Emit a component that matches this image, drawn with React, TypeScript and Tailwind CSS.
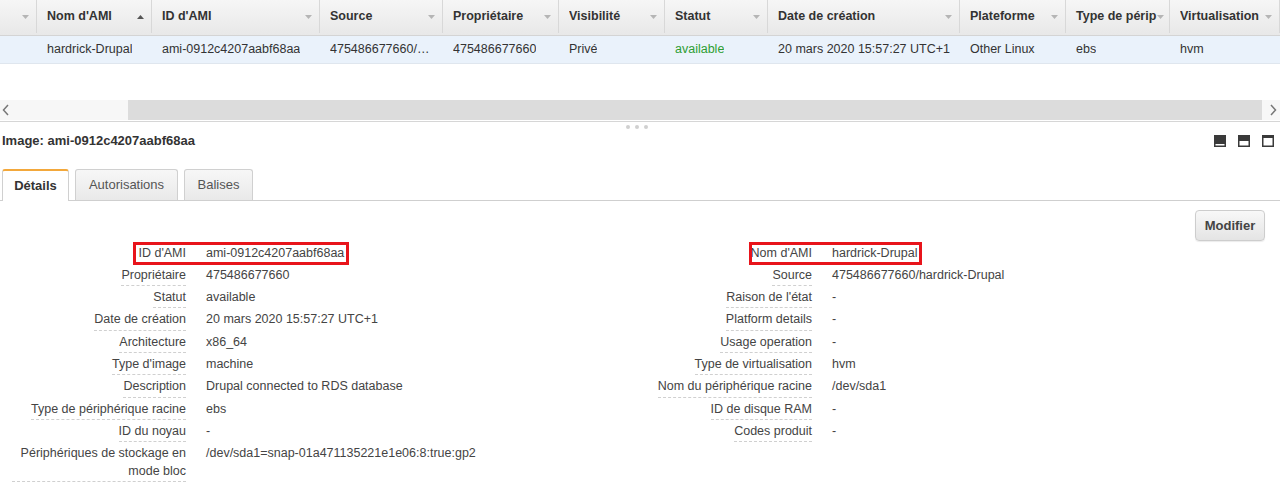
import type { ReactNode } from "react";

const columns = [
  { label: "", width: 37, value: "" },
  { label: "Nom d'AMI", width: 115, value: "hardrick-Drupal", sorted: true },
  { label: "ID d'AMI", width: 168, value: "ami-0912c4207aabf68aa" },
  { label: "Source", width: 123, value: "475486677660/hardrick-Drupal" },
  { label: "Propriétaire", width: 116, value: "475486677660" },
  { label: "Visibilité", width: 106, value: "Privé" },
  { label: "Statut", width: 103, value: "available", green: true },
  { label: "Date de création", width: 192, value: "20 mars 2020 15:57:27 UTC+1" },
  { label: "Plateforme", width: 106, value: "Other Linux" },
  { label: "Type de périp", width: 104, value: "ebs", tight: true },
  { label: "Virtualisation", width: 110, value: "hvm" },
];

const leftRows: Array<[string, string]> = [
  ["ID d'AMI", "ami-0912c4207aabf68aa"],
  ["Propriétaire", "475486677660"],
  ["Statut", "available"],
  ["Date de création", "20 mars 2020 15:57:27 UTC+1"],
  ["Architecture", "x86_64"],
  ["Type d'image", "machine"],
  ["Description", "Drupal connected to RDS database"],
  ["Type de périphérique racine", "ebs"],
  ["ID du noyau", "-"],
  ["Périphériques de stockage en mode bloc", "/dev/sda1=snap-01a471135221e1e06:8:true:gp2"],
];

const rightRows: Array<[string, string]> = [
  ["Nom d'AMI", "hardrick-Drupal"],
  ["Source", "475486677660/hardrick-Drupal"],
  ["Raison de l'état", "-"],
  ["Platform details", "-"],
  ["Usage operation", "-"],
  ["Type de virtualisation", "hvm"],
  ["Nom du périphérique racine", "/dev/sda1"],
  ["ID de disque RAM", "-"],
  ["Codes produit", "-"],
];

function Caret({ up }: { up?: boolean }) {
  return (
    <svg width="7" height="4" viewBox="0 0 7 4" className="shrink-0">
      {up ? (
        <path d="M0 4 L3.5 0 L7 4 Z" fill="#555" />
      ) : (
        <path d="M0 0 L7 0 L3.5 4 Z" fill="#b5b5b5" />
      )}
    </svg>
  );
}

function Chevron({ right }: { right?: boolean }) {
  return (
    <svg width="8" height="12" viewBox="0 0 8 12">
      <path
        d={right ? "M2 1 L6.5 6 L2 11" : "M6 1 L1.5 6 L6 11"}
        fill="none"
        stroke="#777"
        strokeWidth="1.5"
      />
    </svg>
  );
}

function PanelIcon({ fill }: { fill: number }) {
  // fill = height of the dark top part, out of 12
  return (
    <svg width="12" height="12" viewBox="0 0 12 12">
      <rect x="0" y="0" width="12" height="12" fill="#3a3a3a" />
      <rect x="1.5" y={fill} width="9" height={10.5 - fill} fill="#fff" />
    </svg>
  );
}

function DetailRow({
  label,
  value,
  labelWidth,
  boxed,
  boxLeft,
  boxWidth,
}: {
  label: string;
  value: ReactNode;
  labelWidth: number;
  boxed?: boolean;
  boxLeft?: number;
  boxWidth?: number;
}) {
  return (
    <div className="relative flex items-start text-[12.5px] leading-[18px] text-[#444]">
      <div className="shrink-0 text-right" style={{ width: labelWidth }}>
        <span className="inline-block max-w-[174px] border-b border-dashed border-[#d0d0d0] pt-[2px] pb-[1.3px]">
          {label}
        </span>
      </div>
      <div className="pt-[2px] pl-[20px]">{value}</div>
      {boxed && (
        <div
          className="pointer-events-none absolute top-0 h-[23px] border-[3px] border-[#e8141b]"
          style={{ left: boxLeft, width: boxWidth }}
        />
      )}
    </div>
  );
}

export default function App() {
  return (
    <div className="h-[486px] w-[1280px] overflow-hidden bg-white font-['Liberation_Sans',Arial,sans-serif] text-[12.5px] text-[#333]">
      {/* grid header */}
      <div className="flex h-[36px] border-b border-[#d4d4d4] bg-[linear-gradient(#f6f6f6,#e8e8e8)] pb-[2px]">
        {columns.map((c, i) => (
          <div
            key={i}
            className={`flex shrink-0 items-center border-r border-[#d8d8d8] pl-[10px] font-bold text-[#333] ${c.tight ? "pr-[2px]" : "pr-[7px]"}`}
            style={{ width: c.width }}
          >
            <span className={c.tight ? "shrink-0 whitespace-nowrap" : "flex-1 truncate"}>
              {c.label}
            </span>
            <span className={c.tight ? "ml-[1px]" : ""}>
              <Caret up={c.sorted} />
            </span>
            {c.tight && <span className="flex-1" />}
          </div>
        ))}
      </div>
      {/* selected row */}
      <div className="flex h-[28px] border-b border-[#dfe6ee] bg-[#eaf2fb]">
        {columns.map((c, i) => (
          <div
            key={i}
            className={`flex shrink-0 items-center pr-[8px] pl-[10px] ${c.green ? "text-[#2e9e33]" : "text-[#333]"}`}
            style={{ width: c.width }}
          >
            <span className="truncate">{c.value}</span>
          </div>
        ))}
      </div>
      <div className="h-[36px]" />
      {/* horizontal scrollbar */}
      <div className="flex h-[20px] items-center bg-[#f7f7f7]">
        <span className="flex w-[128px] pl-[2px]">
          <Chevron />
        </span>
        <div className="h-full flex-1 bg-[#dcdcdc]" />
        <span className="flex w-[18px] pl-[7px]">
          <Chevron right />
        </span>
      </div>
      {/* splitter */}
      <div className="mt-[1px] h-[10px] border-t border-[#d6d6d6]">
        <div className="flex justify-center gap-[5px] pt-[3px] pr-[6px]">
          <span className="h-[4px] w-[4px] rounded-full bg-[#d0d0d0]" />
          <span className="h-[4px] w-[4px] rounded-full bg-[#d0d0d0]" />
          <span className="h-[4px] w-[4px] rounded-full bg-[#d0d0d0]" />
        </div>
      </div>
      {/* title bar */}
      <div className="flex h-[19px] items-center justify-between pr-[6px] pl-[2px]">
        <span className="text-[13px] font-bold text-[#333]">Image: ami-0912c4207aabf68aa</span>
        <div className="flex gap-[12px]">
          <PanelIcon fill={9} />
          <PanelIcon fill={6} />
          <PanelIcon fill={3} />
        </div>
      </div>
      {/* tabs */}
      <div className="mt-[19px] flex h-[32px] items-end gap-[6px] border-b border-[#cfcfcf] pl-[2px] text-[13px]">
        <div className="mb-[-1px] flex h-[32px] w-[67px] items-center justify-center rounded-t-[3px] border border-b-0 border-t-2 border-[#d0d0d0] border-t-[#f3a83b] bg-white font-bold text-[#333]">
          Détails
        </div>
        <div className="flex h-[31px] w-[103px] items-center justify-center rounded-t-[3px] border border-b-0 border-[#d0d0d0] bg-[linear-gradient(#f7f7f7,#e9e9e9)] text-[#555]">
          Autorisations
        </div>
        <div className="flex h-[31px] w-[69px] items-center justify-center rounded-t-[3px] border border-b-0 border-[#d0d0d0] bg-[linear-gradient(#f7f7f7,#e9e9e9)] text-[#555]">
          Balises
        </div>
      </div>
      {/* details */}
      <div className="pt-[9px]">
        <div className="flex justify-end pr-[15px]">
          <button
            type="button"
            className="h-[31px] w-[70px] rounded-[4px] border border-[#cdcdcd] bg-[linear-gradient(#f8f8f8,#e4e4e4)] text-[13px] font-bold text-[#444] shadow-[0_1px_1px_rgba(0,0,0,0.08)]"
          >
            Modifier
          </button>
        </div>
        <div className="mt-[0.5px] flex">
          <div className="w-[640px]">
            {leftRows.map(([l, v], i) => (
              <DetailRow
                key={l}
                label={l}
                value={v}
                labelWidth={186}
                boxed={i === 0}
                boxLeft={133}
                boxWidth={216}
              />
            ))}
          </div>
          <div className="w-[640px]">
            {rightRows.map(([l, v], i) => (
              <DetailRow
                key={l}
                label={l}
                value={v}
                labelWidth={172}
                boxed={i === 0}
                boxLeft={109}
                boxWidth={173}
              />
            ))}
          </div>
        </div>
      </div>
    </div>
  );
}
